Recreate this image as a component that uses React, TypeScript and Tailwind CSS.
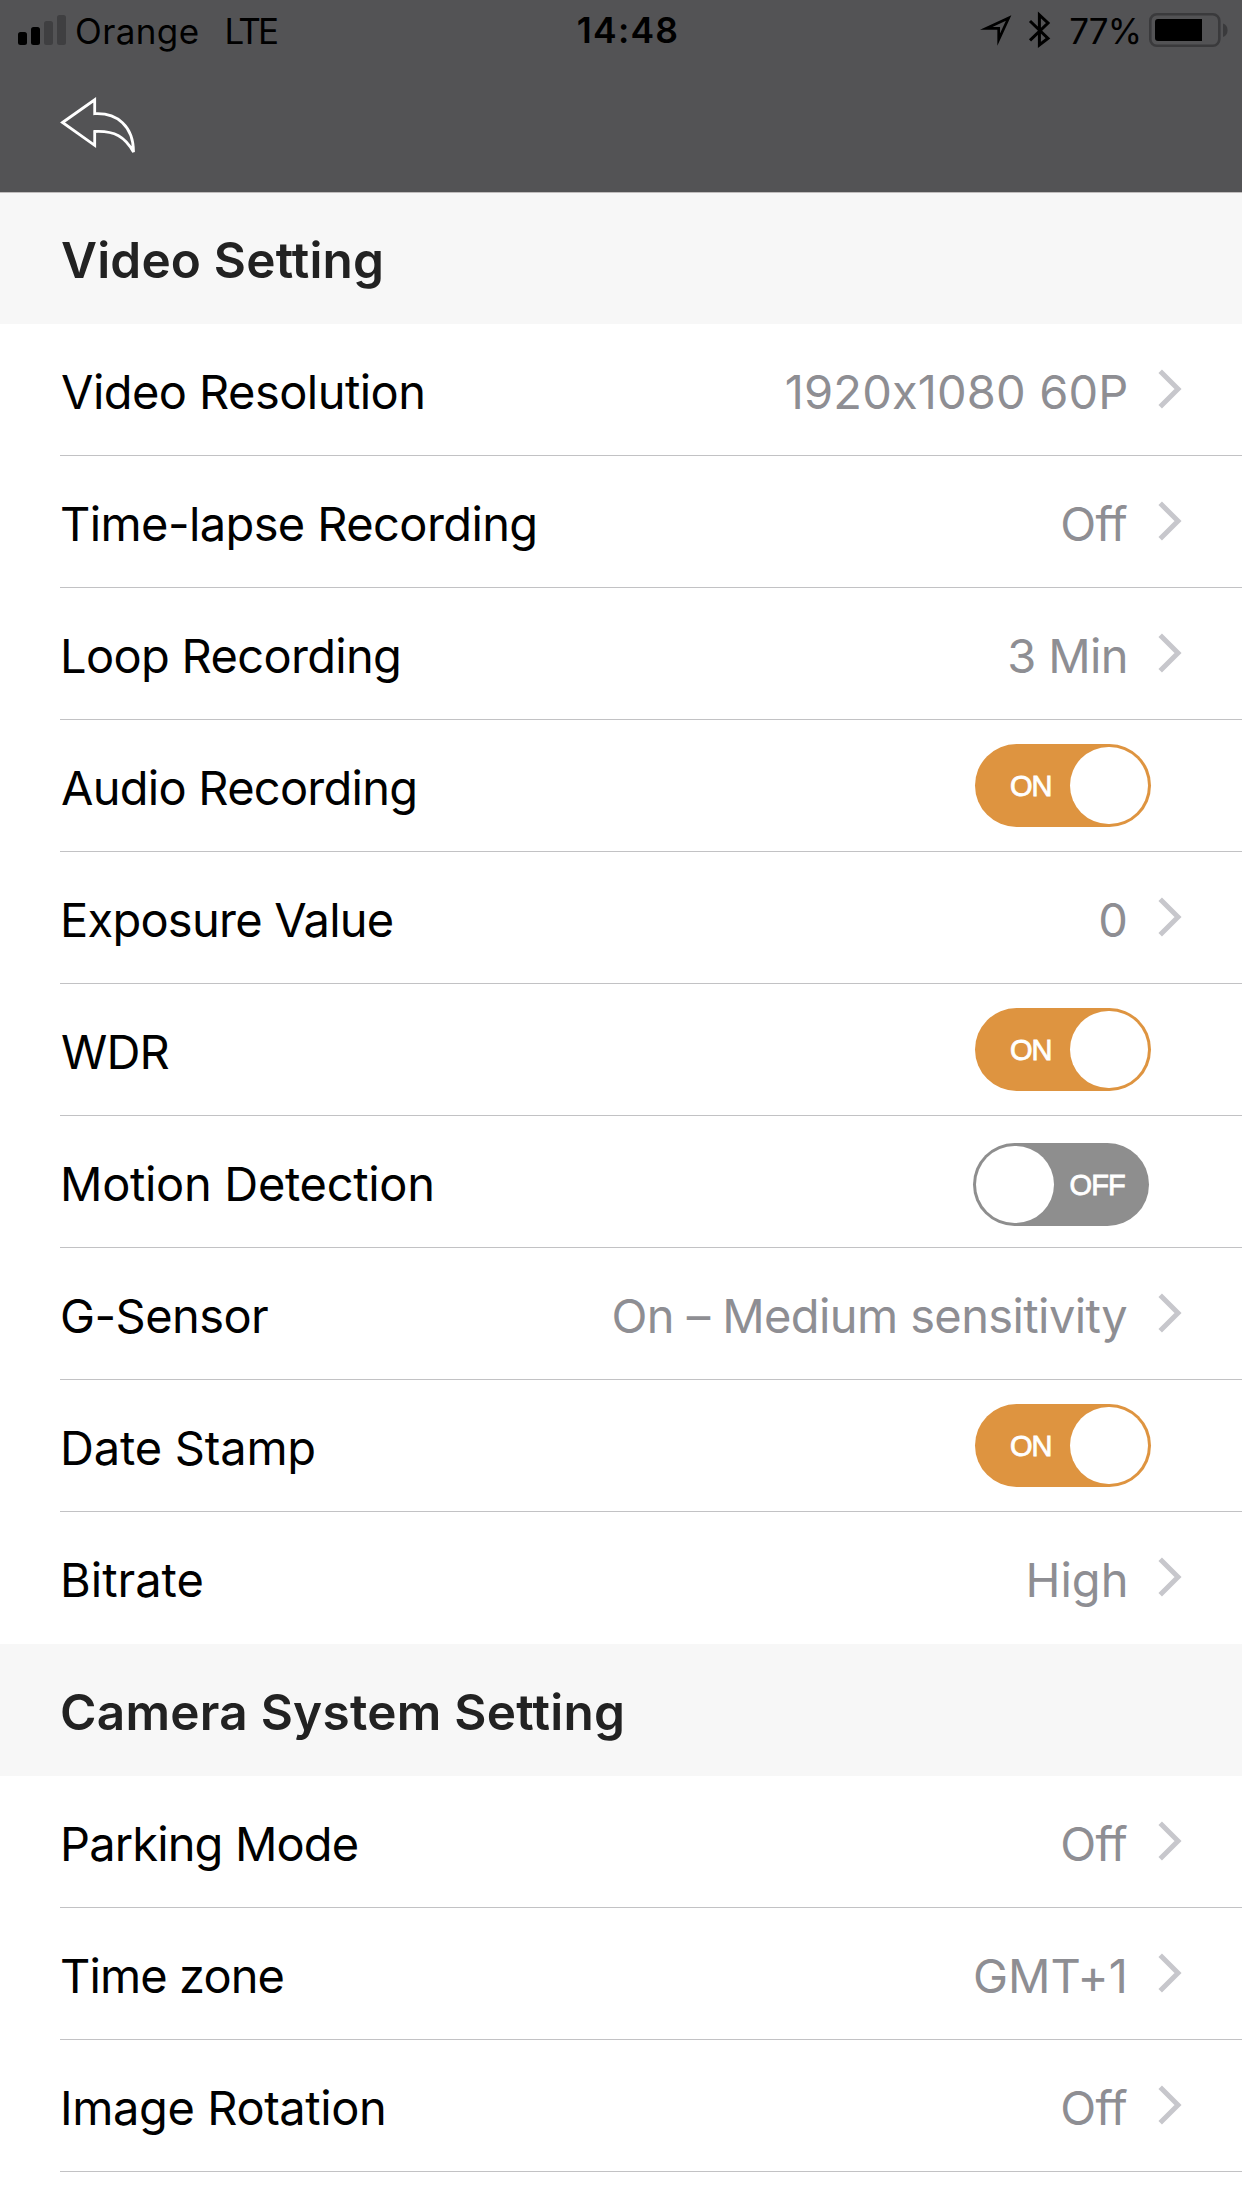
import React from "react";

type Row = {
  label: string;
  labelClass: string;
  value?: string;
  valueClass?: string;
  toggle?: boolean;
};

const videoRows: Row[] = [
  { label: "Video Resolution", labelClass: "ml-px tracking-[-0.55px]", value: "1920x1080 60P", valueClass: "tracking-[0.15px] mr-[-0.5px]" },
  { label: "Time-lapse Recording", labelClass: "tracking-[-0.6px]", value: "Off", valueClass: "tracking-[-0.75px] mr-px" },
  { label: "Loop Recording", labelClass: "tracking-[-0.67px]", value: "3 Min", valueClass: "tracking-[-0.6px]" },
  { label: "Audio Recording", labelClass: "ml-px tracking-[-0.74px]", value: undefined, toggle: true },
  { label: "Exposure Value", labelClass: "tracking-[-0.75px]", value: "0" },
  { label: "WDR", labelClass: "ml-px tracking-[-0.9px]", toggle: true },
  { label: "Motion Detection", labelClass: "tracking-[-0.32px]", toggle: false },
  { label: "G-Sensor", labelClass: "tracking-[-0.56px]", value: "On – Medium sensitivity", valueClass: "tracking-[-0.6px] mr-px" },
  { label: "Date Stamp", labelClass: "tracking-[-0.2px]", toggle: true },
  { label: "Bitrate", labelClass: "tracking-normal", value: "High", valueClass: "tracking-normal mr-[-0.5px]" },
];

const systemRows: Row[] = [
  { label: "Parking Mode", labelClass: "tracking-[-0.86px]", value: "Off", valueClass: "tracking-[-0.75px] mr-px" },
  { label: "Time zone", labelClass: "tracking-[-0.9px]", value: "GMT+1", valueClass: "tracking-[0.1px]" },
  { label: "Image Rotation", labelClass: "tracking-[-0.4px]", value: "Off", valueClass: "tracking-[-0.75px] mr-px" },
];

function Chevron() {
  return (
    <svg className="mb-0.5 ml-[30px] h-10 w-6 shrink-0" viewBox="0 0 24 40" fill="none" stroke="#c7c7cc" strokeWidth="5">
      <path d="M2.2 2.3 20 20 2.2 37.7" />
    </svg>
  );
}

function Toggle({ on }: { on: boolean }) {
  return on ? (
    <div className="mr-[31px] flex h-[83px] w-44 items-center justify-between rounded-full bg-[#de9440] pr-[3px] pl-[35px]">
      <span className="pt-px font-['Liberation_Sans',Arial,sans-serif] text-[29px] tracking-[-1px] text-white [-webkit-text-stroke:0.8px_white]">ON</span>
      <div className="h-[77px] w-[78px] rounded-full bg-white" />
    </div>
  ) : (
    <div className="mt-[6px] mr-[33px] flex h-[83px] w-44 items-center justify-between rounded-full bg-[#8e8e8e] pr-[24px] pl-[3px]">
      <div className="h-[77px] w-[78px] rounded-full bg-white" />
      <span className="pt-px font-['Liberation_Sans',Arial,sans-serif] text-[29px] tracking-[-0.8px] text-white [-webkit-text-stroke:0.8px_white]">OFF</span>
    </div>
  );
}

function SettingRow({ row, last }: { row: Row; last: boolean }) {
  return (
    <div className={`ml-[60px] flex h-[132px] items-center justify-between border-b pr-[60px] text-[47px] leading-[57px] ${last ? "border-transparent" : "border-[#c2c2c4]"}`}>
      <span className={`pt-[3px] whitespace-nowrap text-black ${row.labelClass}`}>{row.label}</span>
      {row.toggle !== undefined ? (
        <Toggle on={row.toggle} />
      ) : (
        <div className="flex items-center">
          <span className={`pt-[3px] whitespace-nowrap text-[#8e8e93] ${row.valueClass ?? ""}`}>{row.value}</span>
          <Chevron />
        </div>
      )}
    </div>
  );
}

function SectionTitle({ children, first }: { children: React.ReactNode; first?: boolean }) {
  return (
    <div className={`flex items-center bg-[#f7f7f7] text-[49.5px] leading-[60px] font-semibold text-[#222] ${first ? "h-[131px] pt-[3px] pl-[61px] tracking-[0.18px]" : "h-[132px] pt-1 pl-[60px] tracking-[0.26px]"}`}>
      {children}
    </div>
  );
}

function StatusBar() {
  return (
    <div className="grid h-[60px] grid-cols-[1fr_auto_1fr] text-[35px] leading-[42px] text-black">
      <div className="flex items-start pl-[18px]">
        <svg className="mt-[14px] h-8 w-12" viewBox="0 0 48 32">
          <rect x="0" y="18" width="9" height="13" rx="2.5" />
          <rect x="13" y="13" width="9" height="18" rx="2.5" />
          <rect x="26" y="7" width="9" height="24" rx="2.5" fill="#3f3f41" />
          <rect x="39" y="1" width="9" height="30" rx="2.5" fill="#3f3f41" />
        </svg>
        <span className="mt-[10px] ml-[9px] tracking-[0.4px]">Orange</span>
        <span className="mt-[10px] ml-[25px] tracking-[-2.8px]">LTE</span>
      </div>
      <span className="mt-[10px] ml-[14px] text-[35.5px] font-semibold tracking-[1.2px]">14:48</span>
      <div className="flex items-start justify-end pr-[14px]">
        <svg className="mt-[10px] h-10 w-[72px]" viewBox="980 10 72 40" fill="none" stroke="#000" strokeWidth="3">
          <path d="M986 28.4 1008.6 18 998.7 39.5V28.4Z" strokeMiterlimit="10" strokeWidth="2.7" />
          <path d="M1030 21 1048 38.3 1039.4 45V15L1048 23 1030 40.3" strokeMiterlimit="10" />
        </svg>
        <span className="mt-[10px] ml-[17px] tracking-[-1px]">77%</span>
        <svg className="mt-[10px] ml-[7px] h-10 w-20" viewBox="1148 10 80 40">
          <rect x="1150.3" y="14.3" width="69" height="31.4" rx="6.5" fill="none" stroke="#3a3a3c" strokeWidth="2.6" />
          <path d="M1158 19H1202V41H1158Q1155 41 1155 38V22Q1155 19 1158 19Z" />
          <path d="M1223 23.5Q1227.5 25 1227.5 30.2T1223 37Z" fill="#3a3a3c" />
        </svg>
      </div>
    </div>
  );
}

export default function App() {
  return (
    <div className="h-[2208px] w-[1242px] overflow-hidden bg-white font-['Inter',sans-serif]">
      <header className="h-[193px] border-b border-[#c0bdbd] bg-[#535355]">
        <StatusBar />
        <svg className="mt-[34px] ml-[58px] h-[64px] w-20" viewBox="58 94 80 64" fill="none" stroke="#fff" strokeWidth="2.8" strokeMiterlimit="3">
          <path d="M62.5 122.5 94.7 99.8V113.7C117 112.5 133.5 126 133.5 152C125 137 115 130.5 94.7 131.5V145.3Z" />
        </svg>
      </header>
      <SectionTitle first>Video Setting</SectionTitle>
      {videoRows.map((row, i) => (
        <SettingRow key={row.label} row={row} last={i === videoRows.length - 1} />
      ))}
      <SectionTitle>Camera System Setting</SectionTitle>
      {systemRows.map((row) => (
        <SettingRow key={row.label} row={row} last={false} />
      ))}
    </div>
  );
}
